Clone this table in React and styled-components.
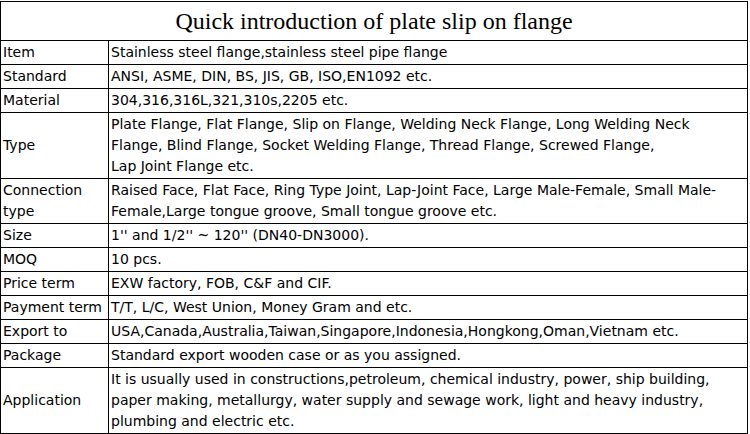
import React from 'react';
import styled, { createGlobalStyle } from 'styled-components';

const GlobalStyle = createGlobalStyle`
  html, body { margin: 0; padding: 0; background: #fff; }
  body { padding-top: 1px; }
`;

const Table = styled.table`
  width: 748px;
  border-collapse: collapse;
  font-family: "DejaVu Sans", Verdana, sans-serif;
  font-size: 14px;
  color: #000;
`;

const TitleCell = styled.th`
  border: 1px solid #000;
  height: 38px;
  padding: 0;
  font-family: "Liberation Serif", "Times New Roman", serif;
  font-weight: normal;
  font-size: 24px;
  text-align: center;
  vertical-align: middle;
`;

const Label = styled.td`
  border: 1px solid #000;
  width: 103px;
  padding: 1px 2px;
  line-height: 21px;
  vertical-align: middle;
  white-space: nowrap;
`;

const Value = styled.td`
  border: 1px solid #000;
  padding: 1px 2px;
  line-height: 21px;
  vertical-align: middle;
`;

const lines = (...parts) => parts.map((p, i) => (
  <React.Fragment key={i}>{i > 0 && <br />}{p}</React.Fragment>
));

const rows = [
  ['Item', 'Stainless steel flange,stainless steel pipe flange'],
  ['Standard', 'ANSI, ASME, DIN, BS, JIS, GB, ISO,EN1092 etc.'],
  ['Material', '304,316,316L,321,310s,2205 etc.'],
  ['Type', lines(
    'Plate Flange, Flat Flange, Slip on Flange, Welding Neck Flange, Long Welding Neck',
    'Flange, Blind Flange, Socket Welding Flange, Thread Flange, Screwed Flange,',
    'Lap Joint Flange etc.'
  )],
  [lines('Connection', 'type'), 'Raised Face, Flat Face, Ring Type Joint, Lap-Joint Face, Large Male-Female, Small Male-Female,Large tongue groove, Small tongue groove etc.'],
  ['Size', '1\'\' and 1/2\'\' ~ 120\'\' (DN40-DN3000).'],
  ['MOQ', '10 pcs.'],
  ['Price term', 'EXW factory, FOB, C&F and CIF.'],
  ['Payment term', 'T/T, L/C, West Union, Money Gram and etc.'],
  ['Export to', 'USA,Canada,Australia,Taiwan,Singapore,Indonesia,Hongkong,Oman,Vietnam etc.'],
  ['Package', 'Standard export wooden case or as you assigned.'],
  ['Application', 'It is usually used in constructions,petroleum, chemical industry, power, ship building, paper making, metallurgy, water supply and sewage work, light and heavy industry, plumbing and electric etc.'],
];

export default function App() {
  return (
    <>
      <GlobalStyle />
      <Table>
        <tbody>
          <tr>
            <TitleCell colSpan={2}>Quick introduction of plate slip on flange</TitleCell>
          </tr>
          {rows.map(([k, v], i) => (
            <tr key={i}>
              <Label>{k}</Label>
              <Value>{v}</Value>
            </tr>
          ))}
        </tbody>
      </Table>
    </>
  );
}
